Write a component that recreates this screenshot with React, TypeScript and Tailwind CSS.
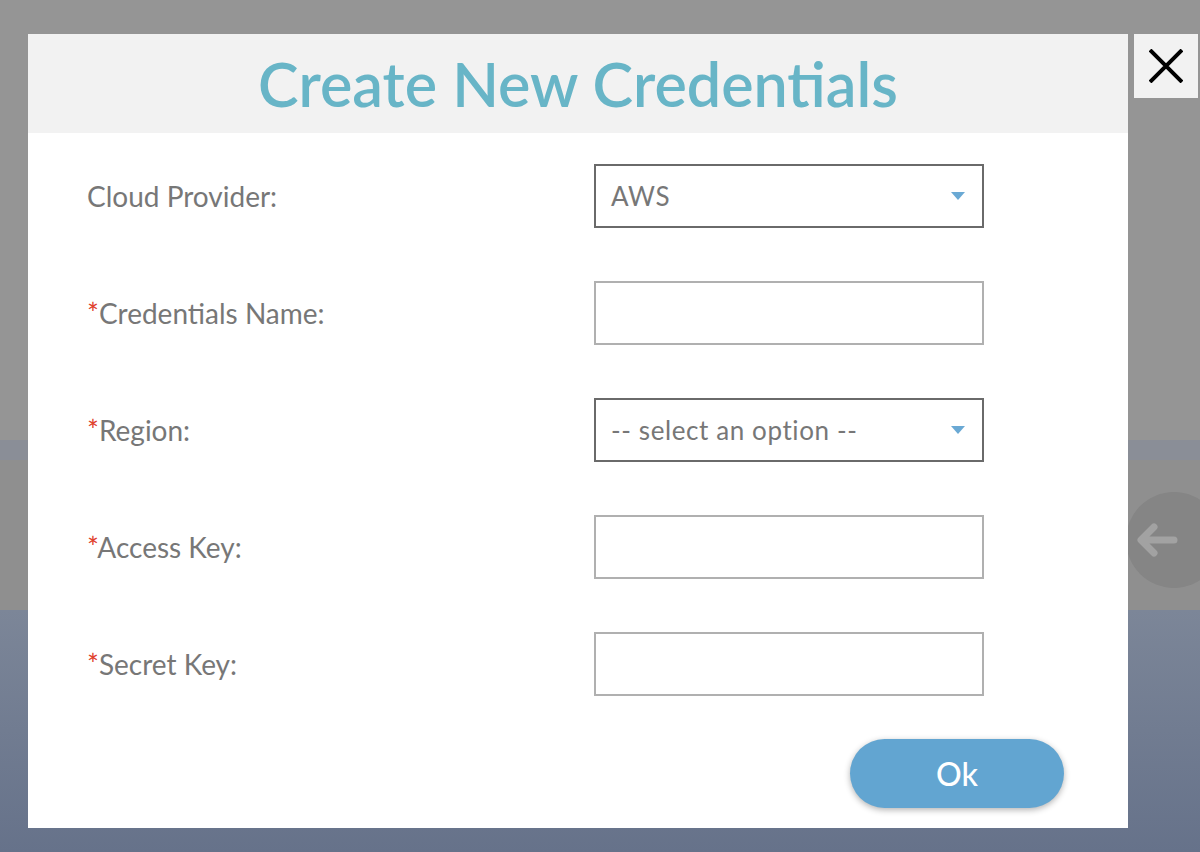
const fields = [
  { label: "Cloud Provider:", required: false, kind: "select", value: "AWS" },
  { label: "Credentials Name:", required: true, kind: "input" },
  { label: "Region:", required: true, kind: "select", value: "-- select an option --" },
  { label: "Access Key:", required: true, kind: "input" },
  { label: "Secret Key:", required: true, kind: "input" },
];

function Caret() {
  return (
    <svg width="16" height="10" viewBox="0 0 16 10" className="shrink-0">
      <path d="M1 1h14L8 9z" fill="#6aa9d4" />
    </svg>
  );
}

export default function App() {
  return (
    <div className="relative h-[852px] w-[1200px] overflow-hidden font-['Lato',sans-serif]">
      {/* page behind the overlay */}
      <div className="flex h-full flex-col">
        <div className="h-[440px] bg-[#959595]" />
        <div className="h-[20px] bg-[#8a8e97]" />
        <div className="flex h-[150px] items-center justify-end bg-[#8f8f8f]">
          <div className="mr-[-22px] mt-[10px] flex h-[96px] w-[96px] items-center justify-start rounded-full bg-[#858585] pl-[10px]">
            <svg width="42" height="34" viewBox="0 0 42 34">
              <path d="M18 4 5 17l13 13M6 17h32" stroke="#a2a2a2" strokeWidth="7" strokeLinecap="round" strokeLinejoin="round" fill="none" />
            </svg>
          </div>
        </div>
        <div className="flex-1 bg-gradient-to-b from-[#7c8698] to-[#66728a]" />
      </div>

      {/* modal */}
      <div className="absolute left-[28px] top-[34px] flex h-[794px] w-[1100px] flex-col bg-white">
        <div className="flex h-[99px] items-center justify-center bg-[#f2f2f2]">
          <h1 className="text-[61px] font-semibold text-[#68b5c7]">Create New Credentials</h1>
        </div>
        <div className="flex flex-col gap-[53px] pl-[59px] pt-[31px]">
          {fields.map((f) => (
            <div key={f.label} className="flex items-center">
              <div className="w-[507px] text-[28px] text-[#777]">
                {f.required && <span className="text-[#e0402b]">*</span>}
                {f.label}
              </div>
              {f.kind === "select" ? (
                <div className="flex h-[64px] w-[390px] items-center justify-between border-2 border-[#6a6a6a] pl-[15px] pr-[16px] text-[26px] tracking-[0.6px] text-[#777]">
                  <span>{f.value}</span>
                  <Caret />
                </div>
              ) : (
                <div className="h-[64px] w-[390px] border-2 border-[#b0b0b0]" />
              )}
            </div>
          ))}
        </div>
        <div className="flex justify-end pr-[64px] pt-[43px]">
          <button className="h-[69px] w-[214px] rounded-full bg-[#62a5d1] text-[32px] font-medium text-white shadow-[0_2px_6px_rgba(0,0,0,0.3)]">
            Ok
          </button>
        </div>
      </div>

      {/* close */}
      <div className="absolute left-[1134px] top-[34px] flex h-[64px] w-[64px] items-center justify-center bg-[#f2f2f2]">
        <svg width="34" height="34" viewBox="0 0 34 34">
          <path d="M1 1l32 32M33 1 1 33" stroke="#000" strokeWidth="4" fill="none" />
        </svg>
      </div>
    </div>
  );
}
